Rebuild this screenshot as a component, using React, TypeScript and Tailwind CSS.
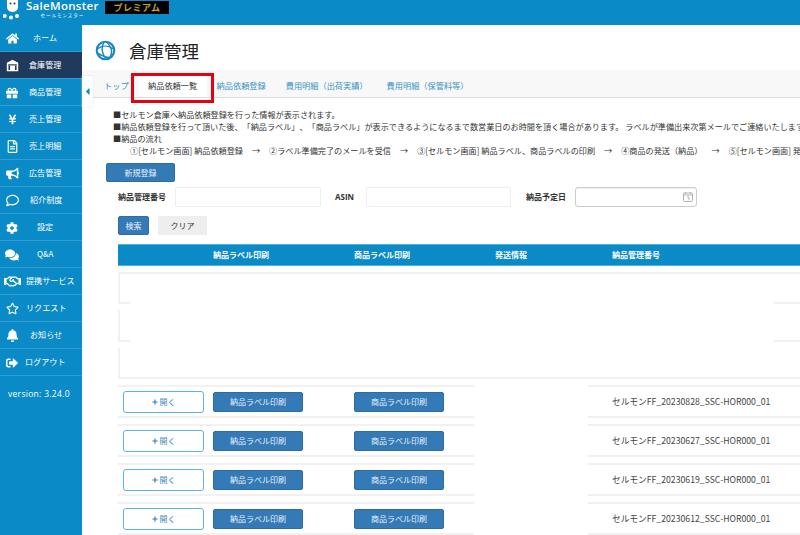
import React from "react";
import { FaHome, FaGift, FaYenSign, FaRegFileAlt, FaBullhorn, FaRegComment, FaCog, FaComments, FaRegHandshake, FaRegStar, FaBell, FaSignOutAlt, FaPlus, FaCaretLeft } from "react-icons/fa";

function Garage({ className }: { className?: string }) {
  return (
    <svg viewBox="0 0 16 16" className={className} fill="currentColor">
      <path d="M8 1 1 4.5V15h14V4.5L8 1Zm5 12.5H3V6h10v7.5Z" />
      <rect x="5" y="8.5" width="6" height="5" />
      <rect x="4" y="7" width="8" height="1" />
    </svg>
  );
}

type NavItem = { label: string; Icon: React.ComponentType<{ className?: string }>; pad: string; active?: boolean; size: string };

const nav: NavItem[] = [
  { label: "ホーム", Icon: FaHome, pad: "pl-[9px]", size: "text-[13px]" },
  { label: "倉庫管理", Icon: Garage, pad: "pl-[5px]", active: true, size: "w-[13px] h-[13px]" },
  { label: "商品管理", Icon: FaGift, pad: "pl-[5px]", size: "text-[12px]" },
  { label: "売上管理", Icon: FaYenSign, pad: "pl-[5px]", size: "text-[11px]" },
  { label: "売上明細", Icon: FaRegFileAlt, pad: "pl-[5px]", size: "text-[13px]" },
  { label: "広告管理", Icon: FaBullhorn, pad: "pl-[5px]", size: "text-[13px]" },
  { label: "紹介制度", Icon: FaRegComment, pad: "pl-[6px]", size: "text-[13px]" },
  { label: "設定", Icon: FaCog, pad: "pl-[13px]", size: "text-[12px]" },
  { label: "Q&A", Icon: FaComments, pad: "pl-[13px]", size: "text-[14px]" },
  { label: "提携サービス", Icon: FaRegHandshake, pad: "pl-[2px]", size: "text-[17px]" },
  { label: "リクエスト", Icon: FaRegStar, pad: "pl-[2px]", size: "text-[13px]" },
  { label: "お知らせ", Icon: FaBell, pad: "pl-[6px]", size: "text-[13px]" },
  { label: "ログアウト", Icon: FaSignOutAlt, pad: "pl-[1px]", size: "text-[12px]" },
];

function NavRow({ item }: { item: NavItem }) {
  const { Icon } = item;
  return (
    <div className={`flex h-[27px] items-center border-b border-[#2f9fd3] pt-[1px] ${item.active ? "bg-[#1f3a5c]" : ""}`}>
      <div className="flex w-[24px] shrink-0 justify-center">
        <Icon className={item.size} />
      </div>
      <div className={`whitespace-nowrap text-[8.1px] ${item.pad}`}>{item.label}</div>
    </div>
  );
}

function BlueBtn({ children, className = "" }: { children: React.ReactNode; className?: string }) {
  return (
    <div className={`flex items-center justify-center rounded-[2px] border border-[#2e6da4] bg-[#337ab7] text-[8px] text-[#e8f0f7] ${className}`}>
      {children}
    </div>
  );
}

function Row({ code }: { code: string }) {
  return (
    <div className="grid h-[33px] grid-cols-[356px_114px_1fr]">
      <div className="flex items-center border-y-2 border-[#f1f1f1] pl-[5px]">
        <div className="flex h-[22px] w-[81px] items-center justify-center gap-[2px] rounded-[3px] border border-[#5bb5dc] bg-white text-[8px] text-[#3b8cb8]">
          <FaPlus className="text-[6px] text-[#337ab7]" />
          開く
        </div>
        <BlueBtn className="ml-[9px] h-[20px] w-[90px]">納品ラベル印刷</BlueBtn>
        <BlueBtn className="ml-[51px] h-[20px] w-[90px]">商品ラベル印刷</BlueBtn>
      </div>
      <div></div>
      <div className="flex items-center whitespace-nowrap border-y-2 border-[#f1f1f1] pl-[24px] text-[8.7px] text-[#444444]">{code}</div>
    </div>
  );
}

function EmptyRow({ top, bottom }: { top?: boolean; bottom?: boolean }) {
  return (
    <div className={`flex border-l-2 border-[#f1f1f1] ${bottom ? "h-[31px]" : "h-[32px]"} ${top ? "border-t-2" : ""} ${bottom ? "border-b-2" : ""}`}>
      <div className={`w-[10px] ${bottom ? "" : "border-b-2 border-[#f1f1f1]"}`}></div>
      <div className="flex-1"></div>
      <div className={`w-[26px] ${bottom ? "" : "border-b-2 border-[#f1f1f1]"}`}></div>
    </div>
  );
}

export default function App() {
  return (
    <div
      className="flex h-[535px] w-[800px] flex-col overflow-hidden bg-white text-[#333333] [text-spacing-trim:space-all]"
      style={{ fontFamily: '"Noto Sans CJK JP", "Noto Sans", sans-serif' }}
    >
      <header className="flex h-[25px] shrink-0 items-start bg-[#0a8ac6] text-white">
        <div className="flex w-[100px] items-start pl-[3px]">
          <svg viewBox="0 0 18 20" className="h-[20px] w-[18px] shrink-0" fill="white">
            <path d="M4 0h11v7a5 5 0 0 1-5 5H9a5 5 0 0 1-5-5Z" />
            <circle cx="7.5" cy="3.5" r="1" fill="#1f3a5c" />
            <circle cx="11.5" cy="3.5" r="1" fill="#1f3a5c" />
            <circle cx="1.8" cy="16" r="2" />
            <circle cx="8" cy="17.5" r="2" />
            <circle cx="14" cy="16" r="2" />
          </svg>
          <div className="ml-[5px] flex flex-col items-center">
            <div className="whitespace-nowrap text-[11.5px] font-semibold leading-[12px] tracking-[0.3px]" style={{ fontFamily: '"Open Sans", sans-serif' }}>
              SaleMonster
            </div>
            <div className="whitespace-nowrap text-[4.5px] leading-[6px] tracking-[1px]">セールモンスター</div>
          </div>
        </div>
        <div className="ml-[5px] mt-[1px] flex h-[13px] w-[64px] items-center justify-center bg-black text-[9px] font-bold tracking-[0.5px] text-[#c9a227]">
          プレミアム
        </div>
      </header>
      <div className="flex min-h-0 flex-1">
        <aside className="flex w-[82px] shrink-0 flex-col bg-[#0a8ac6] text-white">
          {nav.map((item) => (
            <NavRow key={item.label} item={item} />
          ))}
          <div className="pl-[8px] pt-[12px] text-[8.5px] tracking-[0.3px]" style={{ fontFamily: '"Open Sans", sans-serif' }}>
            version: 3.24.0
          </div>
        </aside>
        <main className="relative min-w-0 flex-1">
          <div className="flex h-[45px] items-center pl-[13px] pt-[6px]">
            <svg viewBox="0 0 24 24" className="h-[21px] w-[21px] shrink-0" fill="none" stroke="#1585c8" strokeWidth="2.4">
              <circle cx="12" cy="12" r="10" />
              <path d="M3 10c5-4 12-4 18 0M3 15c6 4 9 5 14 5M10 3c-3 5-2 12 2 18M17 20c3-5 3-11-3-17" strokeWidth="1.6" />
            </svg>
            <h1 className="ml-[13px] text-[17.5px] leading-none text-[#222222]">倉庫管理</h1>
          </div>
          <div className="absolute left-0 top-[51px] flex h-[31px] w-[11px] items-center justify-center rounded-r-[2px] bg-white text-[#0a8ac6] shadow-[0_0_2px_#dddddd]">
            <FaCaretLeft className="text-[11px]" />
          </div>
          <div className="flex h-[28px] border-b border-[#dddddd] bg-[#f8f8f8] pl-[22px] pt-[3px] text-[8.2px] text-[#3a93c4]">
            <div className="flex items-center">トップ</div>
            <div className="ml-[10px] flex w-[68px] items-center justify-center bg-white text-[#333333]">納品依頼一覧</div>
            <div className="ml-[10px] flex items-center whitespace-nowrap">納品依頼登録</div>
            <div className="ml-[20px] flex items-center whitespace-nowrap">費用明細（出荷実績）</div>
            <div className="ml-[19px] flex items-center whitespace-nowrap">費用明細（保管料等）</div>
          </div>
          <div className="absolute left-[49px] top-[48px] h-[30px] w-[83px] border-[3px] border-[#e60012]"></div>
          <div className="whitespace-nowrap pl-[31px] pt-[11px] text-[8.15px] leading-[12px] text-[#333333]">
            <div>■セルモン倉庫へ納品依頼登録を行った情報が表示されます。</div>
            <div>■納品依頼登録を行って頂いた後、「納品ラベル」、「商品ラベル」が表示できるようになるまで数営業日のお時間を頂く場合があります。 ラベルが準備出来次第メールでご連絡いたします。</div>
            <div>■納品の流れ</div>
            <div className="flex pl-[17px]">
              <span>①[セルモン画面] 納品依頼登録</span>
              <span className="ml-[9px]">→</span>
              <span className="ml-[9px]">②ラベル準備完了のメールを受信</span>
              <span className="ml-[9px]">→</span>
              <span className="ml-[9px]">③[セルモン画面] 納品ラベル、商品ラベルの印刷</span>
              <span className="ml-[9px]">→</span>
              <span className="ml-[9px]">④商品の発送（納品）</span>
              <span className="ml-[9px]">→</span>
              <span className="ml-[9px]">⑤[セルモン画面] 発送情報</span>
            </div>
          </div>
          <div className="pl-[24px] pt-[6px]">
            <BlueBtn className="h-[19px] w-[69px]">新規登録</BlueBtn>
          </div>
          <div className="flex items-center pl-[36px] pt-[5px] text-[8px] font-bold text-[#333333]">
            <div className="w-[57px]">納品管理番号</div>
            <div className="h-[20px] w-[146px] rounded-[2px] border border-[#eeeeee]"></div>
            <div className="ml-[14px] w-[31px]" style={{ fontFamily: '"Open Sans", sans-serif' }}>ASIN</div>
            <div className="h-[20px] w-[145px] rounded-[2px] border border-[#eeeeee]"></div>
            <div className="ml-[15px] w-[49px]">納品予定日</div>
            <div className="flex h-[20px] w-[122px] items-center justify-end rounded-[3px] border border-[#cccccc] pr-[3px] shadow-[inset_0_1px_1px_#eeeeee]">
              <svg viewBox="0 0 10 10" className="h-[10px] w-[10px]" fill="none" stroke="#aaaaaa" strokeWidth="0.9">
                <rect x="0.5" y="1" width="9" height="8.5" rx="1" />
                <path d="M0.5 3h9M2.5 0v1.5M7.5 0v1.5M4 5h2v3" />
              </svg>
            </div>
          </div>
          <div className="flex pl-[36px] pt-[9px]">
            <BlueBtn className="h-[19px] w-[31px]">検索</BlueBtn>
            <div className="ml-[9px] flex h-[19px] w-[49px] items-center justify-center bg-[#eeeeee] text-[8px] text-[#333333]">クリア</div>
          </div>
          <div className="ml-[36px] mt-[9px] grid h-[22px] grid-cols-[95px_141px_141px_117px_1fr] items-center border-y border-[#45b4e2] bg-[#0a8ac6] text-[8px] font-bold whitespace-nowrap text-white">
            <div></div>
            <div>納品ラベル印刷</div>
            <div>商品ラベル印刷</div>
            <div>発送情報</div>
            <div>納品管理番号</div>
          </div>
          <div className="ml-[36px] flex flex-col gap-[6px] pt-[6px]">
            <EmptyRow top />
            <EmptyRow />
            <EmptyRow bottom />
            <Row code="セルモンFF_20230828_SSC-HOR000_01" />
            <Row code="セルモンFF_20230627_SSC-HOR000_01" />
            <Row code="セルモンFF_20230619_SSC-HOR000_01" />
            <Row code="セルモンFF_20230612_SSC-HOR000_01" />
          </div>
        </main>
      </div>
    </div>
  );
}
